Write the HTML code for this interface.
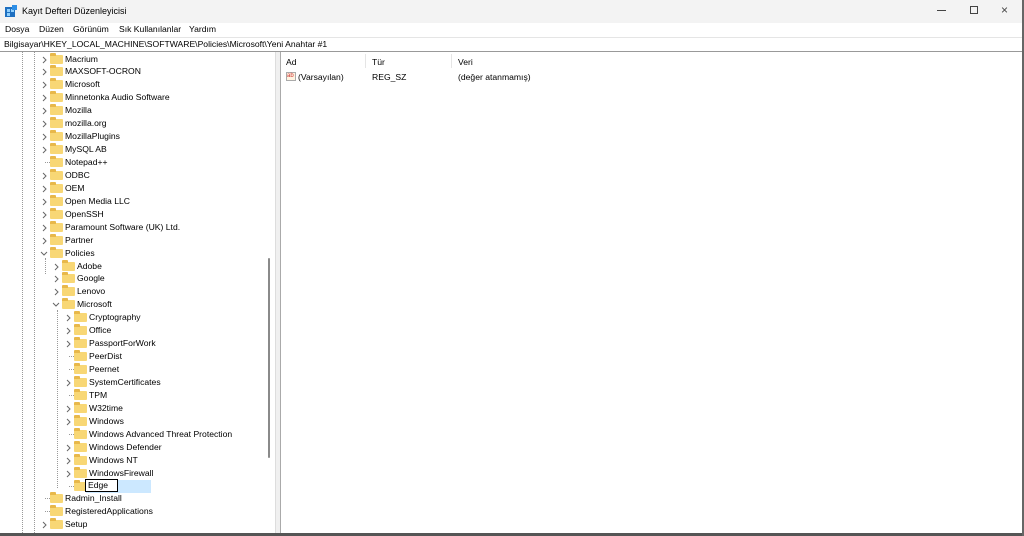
<!DOCTYPE html>
<html><head><meta charset="utf-8"><style>
*{margin:0;padding:0;box-sizing:border-box}
body{width:1024px;height:536px;overflow:hidden;background:#fff;font-family:"Segoe UI","Liberation Sans",sans-serif;font-size:8.6px;color:#000;position:relative}
.a{position:absolute;white-space:nowrap}
.r{position:absolute;height:13px;line-height:13px;white-space:nowrap}
.f{position:absolute;top:2px;width:13px;height:9px;background:#f8d775;border-radius:1px}
.f:before{content:"";position:absolute;left:0;top:-2px;width:6px;height:3px;background:#e8b84a;border-radius:1px 1px 0 0}
.c{position:absolute;top:3px}
.dv{position:absolute;border-left:1px dotted #999}
.dh{position:absolute;border-top:1px dotted #999;width:5px}
</style></head><body>
<div class="a" style="left:0;top:0;width:1024px;height:23px;background:#f3f3f3"></div>
<svg class="a" style="left:5px;top:5px" width="12" height="12"><rect x="0" y="2" width="10" height="10" fill="#1e6fc0"/><rect x="2" y="4" width="3" height="3" fill="#8fd0ff"/><rect x="6" y="4" width="3" height="3" fill="#8fd0ff"/><rect x="2" y="8" width="3" height="3" fill="#8fd0ff"/><rect x="7" y="0" width="5" height="5" fill="#2d8ee6"/></svg>
<div class="a" style="left:22px;top:6px;font-size:9px">Kayıt Defteri Düzenleyicisi</div>
<div class="a" style="left:937px;top:10px;width:9px;border-top:1px solid #444"></div>
<div class="a" style="left:970px;top:6px;width:8px;height:8px;border:1px solid #444"></div>
<div class="a" style="left:1001px;top:3px;font-size:12px;color:#444">×</div>
<div class="a" style="left:5px;top:24px">Dosya</div>
<div class="a" style="left:39px;top:24px">Düzen</div>
<div class="a" style="left:73px;top:24px">Görünüm</div>
<div class="a" style="left:119px;top:24px">Sık Kullanılanlar</div>
<div class="a" style="left:189px;top:24px">Yardım</div>
<div class="a" style="left:0;top:37px;width:1024px;border-top:1px solid #e5e5e5"></div>
<div class="a" style="left:4px;top:39px">Bilgisayar\HKEY_LOCAL_MACHINE\SOFTWARE\Policies\Microsoft\Yeni Anahtar #1</div>
<div class="a" style="left:0;top:51px;width:1024px;border-top:1px solid #999"></div>
<div class="a" style="left:275px;top:52px;width:6px;height:482px;background:#f0f0f0;border-left:1px solid #ddd;border-right:1px solid #aaa"></div>
<div class="a" style="left:268px;top:258px;width:2px;height:200px;background:#8a8a8a;border-radius:1px"></div>
<div class="a" style="left:0;top:533px;width:1024px;height:3px;background:#555"></div>
<div class="a" style="left:1022px;top:0;width:2px;height:536px;background:#666"></div>
<div class="dv" style="left:22px;top:52px;height:481px"></div>
<div class="dv" style="left:34px;top:52px;height:481px"></div>
<div class="dv" style="left:45px;top:258px;height:16px"></div>
<div class="dv" style="left:57px;top:310px;height:178px"></div>
<div class="a" style="left:286px;top:57px">Ad</div>
<div class="a" style="left:372px;top:57px">Tür</div>
<div class="a" style="left:458px;top:57px">Veri</div>
<div class="a" style="left:365px;top:54px;height:14px;border-left:1px solid #e5e5e5"></div>
<div class="a" style="left:451px;top:54px;height:14px;border-left:1px solid #e5e5e5"></div>
<div class="a" style="left:286px;top:72px;width:10px;height:9px;border:1px solid #aaa;font-size:6px;line-height:7px;color:#c33;background:#fff3e0">ab</div>
<div class="a" style="left:298px;top:72px">(Varsayılan)</div>
<div class="a" style="left:372px;top:72px">REG_SZ</div>
<div class="a" style="left:458px;top:72px">(değer atanmamış)</div>
<div class="a" style="left:86px;top:480px;width:65px;height:13px;background:#cce8ff"></div>
<div id="t"></div>
<script>
var rows=[[1,1,"Macrium"],[1,1,"MAXSOFT-OCRON"],[1,1,"Microsoft"],[1,1,"Minnetonka Audio Software"],[1,1,"Mozilla"],[1,1,"mozilla.org"],[1,1,"MozillaPlugins"],[1,1,"MySQL AB"],[1,0,"Notepad++"],[1,1,"ODBC"],[1,1,"OEM"],[1,1,"Open Media LLC"],[1,1,"OpenSSH"],[1,1,"Paramount Software (UK) Ltd."],[1,1,"Partner"],[1,2,"Policies"],[2,1,"Adobe"],[2,1,"Google"],[2,1,"Lenovo"],[2,2,"Microsoft"],[3,1,"Cryptography"],[3,1,"Office"],[3,1,"PassportForWork"],[3,0,"PeerDist"],[3,0,"Peernet"],[3,1,"SystemCertificates"],[3,0,"TPM"],[3,1,"W32time"],[3,1,"Windows"],[3,0,"Windows Advanced Threat Protection"],[3,1,"Windows Defender"],[3,1,"Windows NT"],[3,1,"WindowsFirewall"],[3,3,"Edge"],[1,0,"Radmin_Install"],[1,0,"RegisteredApplications"],[1,1,"Setup"]];
var h="";
rows.forEach(function(r,i){var y=52.5+i*12.94,x=43+(r[0]-1)*12;
h+='<div class="r" style="left:0;top:'+y+'px;width:270px">';
if(r[1]==1)h+='<svg class="c" style="left:'+(x-1)+'px" width="5" height="8"><path d="M1 1L4 4L1 7" fill="none" stroke="#666" stroke-width="1"/></svg>';
else if(r[1]==2)h+='<svg class="c" style="left:'+(x-3)+'px;top:4px" width="8" height="5"><path d="M1 1L4 4L7 1" fill="none" stroke="#666" stroke-width="1"/></svg>';
else h+='<span class="dh" style="left:'+(x+2)+'px;top:6px"></span>';
h+='<span class="f" style="left:'+(x+7)+'px"></span>';
if(r[1]==3)h+='<span class="a" style="left:'+(x+18)+'px;top:-1px;width:33px;height:13px;border:1px solid #000;background:#fff;padding-left:2px;line-height:11px">Edge</span>';
else h+='<span class="a" style="left:'+(x+22)+'px;top:0">'+r[2]+'</span>';
h+='</div>';});
document.getElementById("t").innerHTML=h;
</script>
</body></html>
